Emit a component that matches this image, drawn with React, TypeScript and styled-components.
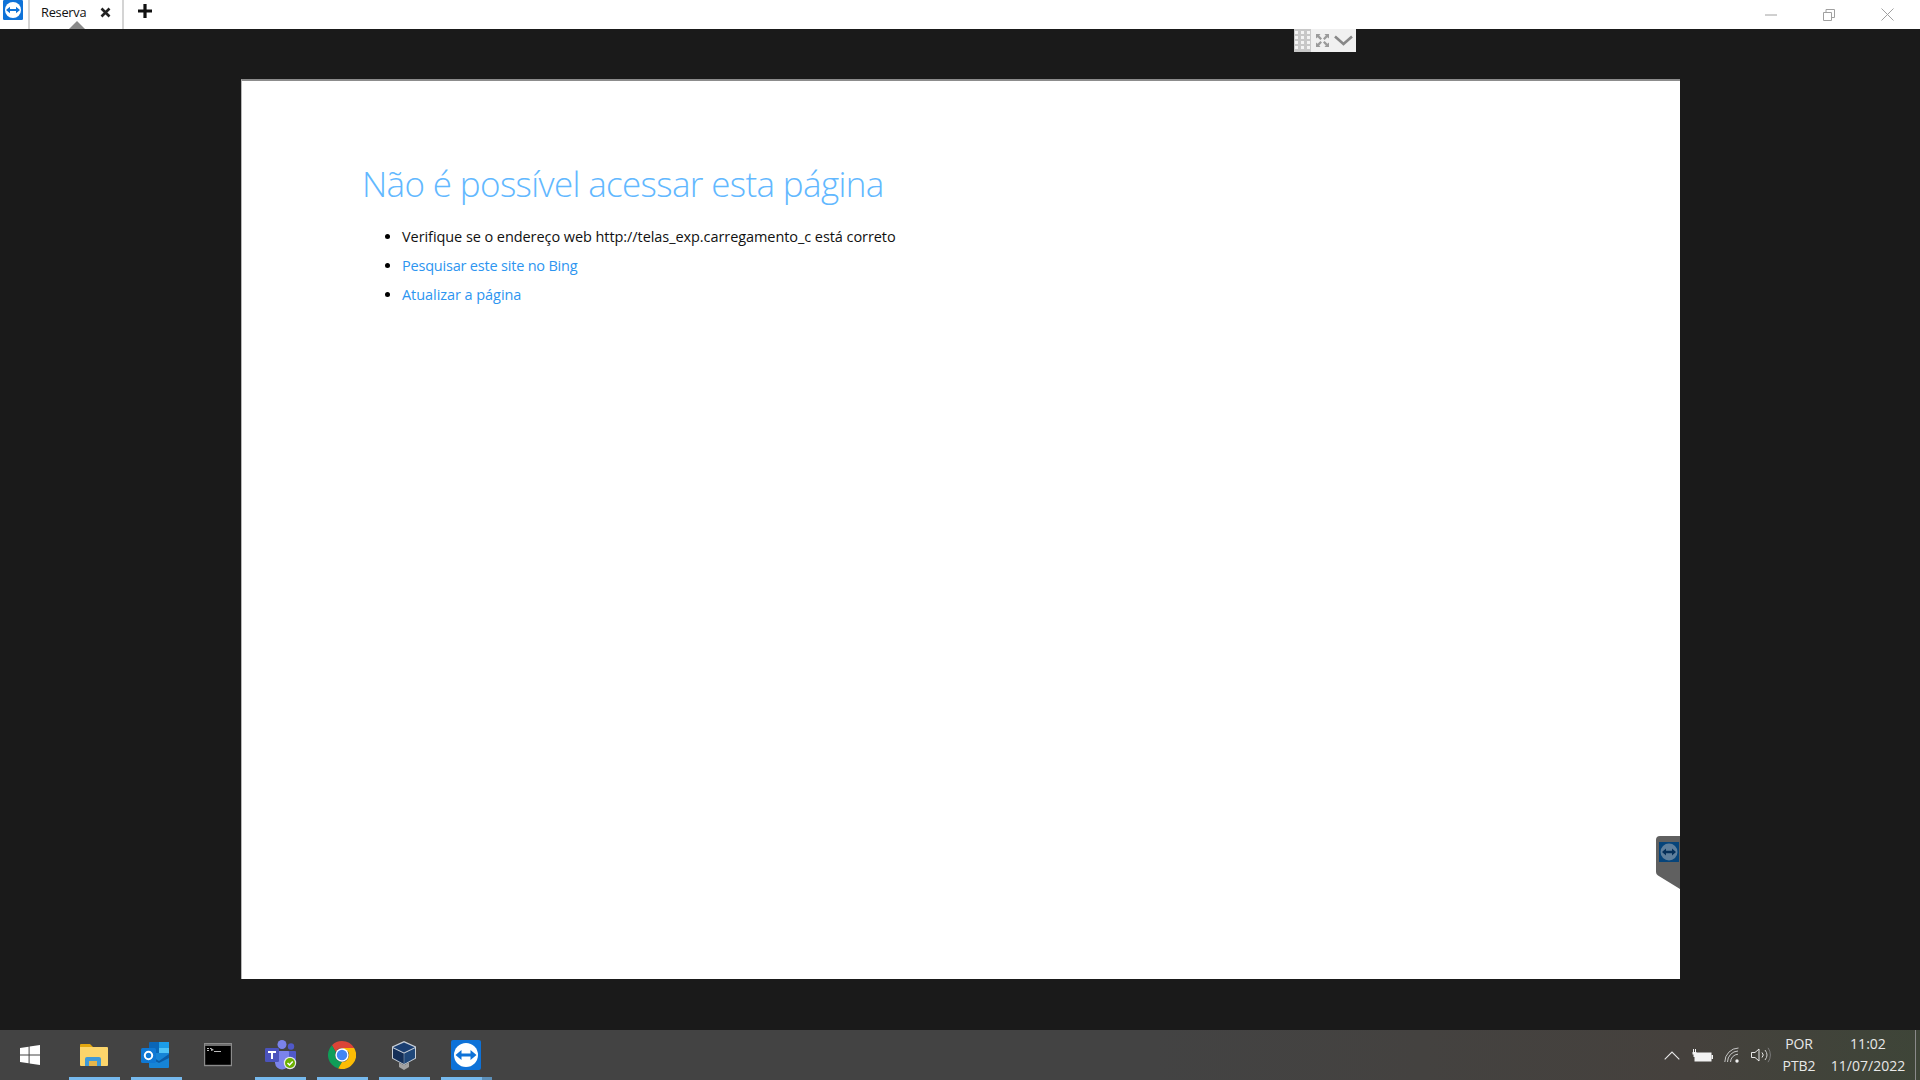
import React from "react";
import styled, { createGlobalStyle } from "styled-components";

const Global = createGlobalStyle`
  html, body { margin: 0; padding: 0; height: 100%; background: #1a1a1a; overflow: hidden; }
  #root { height: 100%; }
  * { box-sizing: border-box; }
`;

const Shell = styled.div`
  width: 1920px;
  height: 1080px;
  display: flex;
  flex-direction: column;
  background: #1a1a1a;
  font-family: "Open Sans", "Liberation Sans", sans-serif;
`;

const TitleBar = styled.header`
  height: 29px;
  flex: none;
  display: flex;
  align-items: stretch;
  background: #fff;
`;

const AppLogo = styled.div`
  width: 28px;
  padding: 0 0 9px 3px;
  display: flex;
  align-items: flex-start;
`;

const Tab = styled.div`
  position: relative;
  width: 96px;
  display: flex;
  align-items: center;
  padding: 0 0 5px 11px;
  border-left: 2px solid #d4d4d4;
  border-right: 2px solid #d4d4d4;
  font-family: "Open Sans", sans-serif;
  font-size: 12.8px;
  letter-spacing: -0.25px;
  color: #111;
`;

const TabName = styled.span`
  width: 59px;
`;

const TabMarker = styled.span`
  position: absolute;
  left: 39px;
  bottom: 0;
  width: 0;
  height: 0;
  border-left: 8px solid transparent;
  border-right: 8px solid transparent;
  border-bottom: 8px solid #8a8a8a;
`;

const PlusButton = styled.div`
  width: 42px;
  display: flex;
  align-items: center;
  justify-content: center;
  padding-bottom: 7px;
`;

const WindowControls = styled.div`
  margin-left: auto;
  display: flex;
  padding-right: 3px;
`;

const WindowButton = styled.div`
  width: 58.5px;
  display: flex;
  align-items: center;
  justify-content: center;
`;

const Remote = styled.main`
  position: relative;
  flex: 1;
  padding: 50px 240px 51px 241px;
  display: flex;
  flex-direction: column;
`;

const RemoteToolbar = styled.div`
  position: absolute;
  top: 0;
  left: 1294px;
  width: 62px;
  height: 23px;
  display: flex;
  background: #f0f0f0;
`;

const GridPart = styled.div`
  width: 17px;
  background: #c8c8c8;
  display: flex;
  align-items: center;
  justify-content: center;
`;

const ToolPart = styled.div<{ $w: number }>`
  width: ${(p) => p.$w}px;
  display: flex;
  align-items: center;
  justify-content: center;
`;

const Page = styled.section`
  position: relative;
  flex: 1;
  background: #fff;
  border-top: 2px solid #8c8c8c;
  border-left: 1px solid #b8b8b8;
  padding: 80px 0 0 120px;
`;

const Heading = styled.h1`
  margin: 0;
  font-family: "Open Sans", sans-serif;
  font-weight: 300;
  font-size: 35px;
  line-height: 46px;
  letter-spacing: -0.65px;
  color: #62b8ff;
  white-space: nowrap;
`;

const Tips = styled.ul`
  margin: 18px 0 0;
  padding: 0 0 0 40px;
  list-style: disc;
  font-family: "Open Sans", sans-serif;
  font-size: 14.5px;
  color: #000;
`;

const Tip = styled.li<{ $link?: boolean; $spacing: number }>`
  height: 29px;
  line-height: 24px;
  letter-spacing: ${(p) => p.$spacing}px;
  color: ${(p) => (p.$link ? "#2d95f0" : "#111")};
  &::marker { color: #000; }
`;

const SideTab = styled.div`
  position: absolute;
  right: 0;
  top: 755px;
  width: 25px;
  height: 54px;
`;

const TaskBar = styled.footer`
  height: 50px;
  flex: none;
  display: flex;
  align-items: stretch;
  background: linear-gradient(90deg, #434343 0%, #434343 60%, #45413d 88%, #3e4538 100%);
`;

const StartButton = styled.div`
  width: 64px;
  display: flex;
  align-items: center;
  justify-content: center;
  padding-right: 4px;
`;

const TaskSlot = styled.div<{ $open?: boolean; $split?: boolean; $nudge?: number }>`
  position: relative;
  width: 62px;
  display: flex;
  align-items: center;
  justify-content: center;
  padding-right: ${(p) => p.$nudge ?? 2}px;
  &::after {
    content: "";
    display: ${(p) => (p.$open ? "block" : "none")};
    position: absolute;
    left: 5px;
    right: 6px;
    bottom: 0;
    height: 3px;
    background: ${(p) =>
      p.$split
        ? "linear-gradient(90deg, #76b9ed 0 80%, #5c8fb8 80% 100%)"
        : "#76b9ed"};
  }
`;

const Tray = styled.div`
  margin-left: auto;
  display: flex;
  align-items: center;
  color: #e8e8e8;
  font-family: "Open Sans", sans-serif;
  font-size: 14px;
`;

const TrayIcon = styled.div<{ $w: number }>`
  width: ${(p) => p.$w}px;
  display: flex;
  align-items: center;
  justify-content: center;
`;

const LangStack = styled.div`
  width: 50px;
  display: flex;
  flex-direction: column;
  align-items: center;
  line-height: 22px;
  letter-spacing: -0.1px;
`;

const ClockStack = styled.div`
  width: 88px;
  display: flex;
  flex-direction: column;
  align-items: center;
  line-height: 22px;
  letter-spacing: 0.02px;
`;

const ShowDesktop = styled.div`
  width: 5px;
  align-self: stretch;
  border-left: 1px solid #8a8a8a;
  margin-left: 3px;
`;

const TVLogo = ({ size, r = 2 }: { size: number; r?: number }) => (
  <svg width={size} height={size} viewBox="0 0 30 30">
    <rect width="30" height="30" rx={r} fill="#0e72d8" />
    <circle cx="15" cy="15" r="12" fill="#fff" />
    <path d="M4.500 15 10.500 10v3.400h9V10l6 5-6 5v-3.400h-9V20z" fill="#0e72d8" />
  </svg>
);

const FolderIcon = () => (
  <svg width="28" height="24" viewBox="0 0 28 24">
    <path d="M0 2a1 1 0 0 1 1-1h9l3 3h-13z" fill="#e2a60f" />
    <path d="M0 4h27a1 1 0 0 1 1 1v17a1 1 0 0 1-1 1H1a1 1 0 0 1-1-1z" fill="#fcd56b" />
    <path d="M5 23v-7a2 2 0 0 1 2-2h12a2 2 0 0 1 2 2v7h-4v-5H9v5z" fill="#3f9ad8" />
    <path d="M9 18h8v5H9z" fill="#e6b64a" />
  </svg>
);

const OutlookIcon = () => (
  <svg width="30" height="28" viewBox="0 0 30 28">
    <path d="M8 2a1 1 0 0 1 1-1h19v11H8z" fill="#0a66b8" />
    <path d="M18 1h10v6H18z" fill="#1b9ce8" />
    <path d="M18 7h10v6H18z" fill="#4fc3f7" />
    <path d="M8 12h20v14a1 1 0 0 1-1 1H9a1 1 0 0 1-1-1z" fill="#1684d6" />
    <path d="M8 14l10 6 10-7v4l-10 5-10-5z" fill="#0a5ba6" />
    <rect x="0" y="7" width="15" height="15" rx="1.500" fill="#0f78d4" />
    <circle cx="7.500" cy="14.500" r="3.700" fill="none" stroke="#fff" strokeWidth="2" />
  </svg>
);

const ConsoleIcon = () => (
  <svg width="28" height="24" viewBox="0 0 28 24">
    <rect x="0.500" y="0.500" width="27" height="22" fill="#000" stroke="#8b8b8b" strokeWidth="1.400" />
    <rect x="1" y="1" width="26" height="2" fill="#6d6d6d" />
    <path d="M3 5h2v1H3zM6 5h1v1H6zM3 7h2v1H3zM7 5l3 2-3 1zM10 8h7v1h-7z" fill="#bdbdbd" />
  </svg>
);

const TeamsIcon = () => (
  <svg width="32" height="30" viewBox="0 0 32 30">
    <circle cx="17" cy="4.500" r="4.500" fill="#7b83eb" />
    <circle cx="26" cy="6.500" r="3.200" fill="#5059c9" />
    <path d="M21 11h9a1 1 0 0 1 1 1v8a5 5 0 0 1-6 4l-4-2z" fill="#5059c9" />
    <path d="M9 11h14a1 1 0 0 1 1 1v10a7 7 0 0 1-14 1z" fill="#7b83eb" />
    <rect x="0" y="8" width="14" height="14" rx="1.200" fill="#4b53bc" />
    <path d="M3 11h8v2H8v6H6v-6H3z" fill="#fff" />
    <circle cx="25" cy="23" r="6.200" fill="#e8e8e8" />
    <circle cx="25" cy="23" r="5" fill="#6cb000" />
    <path d="M22.500 23l2 2 3.200-3.600" fill="none" stroke="#fff" strokeWidth="1.500" />
  </svg>
);

const ChromeIcon = () => (
  <svg width="28" height="28" viewBox="0 0 48 48">
    <path d="M24 0a24 24 0 0 1 20.800 12H24a12 12 0 0 0-10.800 6.800L6.800 7.200A24 24 0 0 1 24 0z" fill="#db4437" />
    <path d="M6.800 7.200l6.400 11.600A12 12 0 0 0 24 36l-6.400 11.100A24 24 0 0 1 6.800 7.200z" fill="#0f9d58" />
    <path d="M44.800 12A24 24 0 0 1 17.600 47.100L24 36a12 12 0 0 0 10.400-18L24 12z" fill="#fbbc05" />
    <circle cx="24" cy="24" r="11.500" fill="#fff" />
    <circle cx="24" cy="24" r="9" fill="#4285f4" />
  </svg>
);

const VBoxIcon = () => (
  <svg width="26" height="29" viewBox="0 0 26 29">
    <path d="M13 0 25 5.500v12L13 24 1 17.500v-12z" fill="#c9d0d8" />
    <path d="M13 1.500 23.800 6.300 13 11.500 2.200 6.300z" fill="#1b3f72" />
    <path d="M2 7.300 12.800 12.500V23L2 17z" fill="#142f58" />
    <path d="M24 7.300 13.200 12.500V23L24 17z" fill="#1f4779" />
    <path d="M8 21.500l5 2.700 5-2.700V26l-5 3-5-3z" fill="#a2a2a2" />
  </svg>
);

const WindowsIcon = () => (
  <svg width="20" height="20" viewBox="0 0 20 20">
    <path d="M0 3l8.600-1.200v7.700H0zM9.600 1.600 20 0v9.500H9.600zM0 10.500h8.600v7.700L0 17zM9.600 10.500H20V20l-10.400-1.500z" fill="#fff" />
  </svg>
);

const App = () => (
  <Shell>
    <Global />
    <TitleBar>
      <AppLogo>
        <TVLogo size={20} />
      </AppLogo>
      <Tab>
        <TabName>Reserva</TabName>
        <svg width="11" height="11" viewBox="0 0 11 11">
          <path d="M1.500 1.500l8 8M9.500 1.500l-8 8" stroke="#222" strokeWidth="2.600" />
        </svg>
        <TabMarker />
      </Tab>
      <PlusButton>
        <svg width="14" height="14" viewBox="0 0 14 14">
          <path d="M7 0v14M0 7h14" stroke="#111" strokeWidth="3.200" />
        </svg>
      </PlusButton>
      <WindowControls>
        <WindowButton>
          <svg width="12" height="2" viewBox="0 0 12 2">
            <path d="M0 1h12" stroke="#a0a0a0" />
          </svg>
        </WindowButton>
        <WindowButton>
          <svg width="12" height="12" viewBox="0 0 12 12">
            <path d="M.5 3.500h8v8h-8zM3 3.500V.5h8.500v8H8.500" fill="none" stroke="#a0a0a0" />
          </svg>
        </WindowButton>
        <WindowButton>
          <svg width="13" height="13" viewBox="0 0 13 13">
            <path d="M.5.5l12 12M12.500.5l-12 12" stroke="#a0a0a0" />
          </svg>
        </WindowButton>
      </WindowControls>
    </TitleBar>

    <Remote>
      <RemoteToolbar>
        <GridPart>
          <svg width="15" height="19" viewBox="0 0 15 19">
            {[0, 6, 12].flatMap((x) =>
              [0, 5, 10, 15].map((y) => (
                <rect key={`${x}-${y}`} x={x} y={y} width="3" height="3" fill="#f4f4f4" />
              ))
            )}
          </svg>
        </GridPart>
        <ToolPart $w={22}>
          <svg width="13" height="13" viewBox="0 0 13 13">
            <path d="M0 0h4.500L3.200 1.600 6 4.400 4.400 6 1.600 3.200 0 4.500zM13 0v4.500l-1.600-1.300L8.600 6 7 4.400l2.800-2.800L8.500 0zM0 13V8.500l1.600 1.300L4.400 7 6 8.600 3.200 11.400 4.500 13zM13 13H8.500l1.300-1.600L7 8.600 8.600 7l2.800 2.800L13 8.500z" fill="#9a9a9a" />
          </svg>
        </ToolPart>
        <ToolPart $w={21}>
          <svg width="19" height="11" viewBox="0 0 19 11">
            <path d="M1 1.500l8.500 7.500L18 1.500" fill="none" stroke="#888" strokeWidth="2.600" />
          </svg>
        </ToolPart>
      </RemoteToolbar>

      <Page>
        <Heading>Não é possível acessar esta página</Heading>
        <Tips>
          <Tip $spacing={-0.07}>Verifique se o endereço web http://telas_exp.carregamento_c está correto</Tip>
          <Tip $link $spacing={-0.2}>Pesquisar este site no Bing</Tip>
          <Tip $link $spacing={-0.06}>Atualizar a página</Tip>
        </Tips>
        <SideTab>
          <svg width="25" height="54" viewBox="0 0 25 54">
            <path d="M25 0H5a4 4 0 0 0-4 4v32a4 4 0 0 0 2 3.500L25 53z" fill="#606060" />
            <rect x="4" y="6" width="20" height="20" fill="#06447a" />
            <circle cx="14" cy="16" r="8.500" fill="#5f7f9c" />
            <path d="M7 16l4-3.500v2.300h6v-2.300l4 3.500-4 3.500v-2.300h-6v2.300z" fill="#06305a" />
          </svg>
        </SideTab>
      </Page>
    </Remote>

    <TaskBar>
      <StartButton>
        <WindowsIcon />
      </StartButton>
      <TaskSlot $open><FolderIcon /></TaskSlot>
      <TaskSlot $open><OutlookIcon /></TaskSlot>
      <TaskSlot $nudge={3}><ConsoleIcon /></TaskSlot>
      <TaskSlot $open $nudge={0}><TeamsIcon /></TaskSlot>
      <TaskSlot $open><ChromeIcon /></TaskSlot>
      <TaskSlot $open><VBoxIcon /></TaskSlot>
      <TaskSlot $open $split><TVLogo size={30} r={2} /></TaskSlot>
      <Tray>
        <TrayIcon $w={30}>
          <svg width="16" height="9" viewBox="0 0 16 9">
            <path d="M.7 8.300 8 1l7.300 7.300" fill="none" stroke="#e8e8e8" strokeWidth="1.100" />
          </svg>
        </TrayIcon>
        <TrayIcon $w={30}>
          <svg width="21" height="13" viewBox="0 0 21 13">
            <path d="M1.500 0v3M3.500 0v3" stroke="#f2f2f2" />
            <path d="M.5 3h4v2.500h-1V8h-2V5.500h-1z" fill="#f2f2f2" />
            <rect x="3" y="4" width="16" height="8" fill="#f2f2f2" stroke="#f2f2f2" />
            <rect x="19.500" y="6" width="1.500" height="4" fill="#f2f2f2" />
          </svg>
        </TrayIcon>
        <TrayIcon $w={30}>
          <svg width="16" height="16" viewBox="0 0 16 16">
            <path d="M.8 15A14 14 0 0 1 14.500 1M3.500 15A11 11 0 0 1 14 4M6.500 15A8 8 0 0 1 14 7.200" fill="none" stroke="#c8c8c8" strokeWidth="1" />
            <circle cx="13" cy="14" r="1.700" fill="#f2f2f2" />
          </svg>
        </TrayIcon>
        <TrayIcon $w={27}>
          <svg width="20" height="16" viewBox="0 0 20 16">
            <path d="M.5 5.500h3.500L8 2v12L4 10.500H.5z" fill="none" stroke="#e8e8e8" />
            <path d="M11 5.500a3.500 3.500 0 0 1 0 5" fill="none" stroke="#e8e8e8" />
            <path d="M14 3a8 8 0 0 1 0 10" fill="none" stroke="#cfcfcf" />
            <path d="M17 .8a12 12 0 0 1 0 14.400" fill="none" stroke="#7b7b7b" />
          </svg>
        </TrayIcon>
        <LangStack>
          <span>POR</span>
          <span>PTB2</span>
        </LangStack>
        <ClockStack>
          <span>11:02</span>
          <span>11/07/2022</span>
        </ClockStack>
        <ShowDesktop />
      </Tray>
    </TaskBar>
  </Shell>
);

export default App;
